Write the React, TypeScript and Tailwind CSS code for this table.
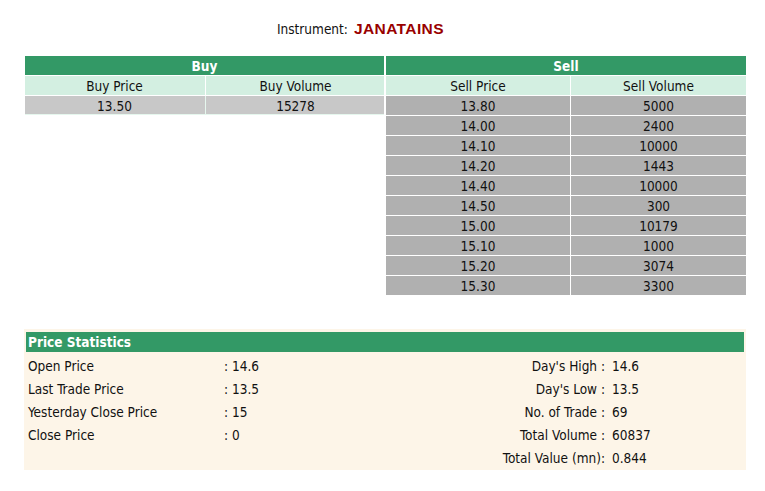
const buyRows = [{ price: "13.50", volume: "15278" }];

const sellRows = [
  { price: "13.80", volume: "5000" },
  { price: "14.00", volume: "2400" },
  { price: "14.10", volume: "10000" },
  { price: "14.20", volume: "1443" },
  { price: "14.40", volume: "10000" },
  { price: "14.50", volume: "300" },
  { price: "15.00", volume: "10179" },
  { price: "15.10", volume: "1000" },
  { price: "15.20", volume: "3074" },
  { price: "15.30", volume: "3300" },
];

const leftStats = [
  { label: "Open Price", value: "14.6" },
  { label: "Last Trade Price", value: "13.5" },
  { label: "Yesterday Close Price", value: "15" },
  { label: "Close Price", value: "0" },
  { label: "", value: "" },
];

const rightStats = [
  { label: "Day's High :", value: "14.6" },
  { label: "Day's Low :", value: "13.5" },
  { label: "No. of Trade :", value: "69" },
  { label: "Total Volume :", value: "60837" },
  { label: "Total Value (mn):", value: "0.844" },
];

const font = "font-['DejaVu_Sans_Condensed','DejaVu_Sans',sans-serif]";

export default function App() {
  return (
    <div className={`w-[765px] h-[491px] bg-white text-[13.5px] text-[#111] ${font}`}>
      <div className="pt-[20px] h-[56px] flex items-start pl-[277px]">
        <span className="leading-[18px]">Instrument:</span>
        <span className="ml-[6px] leading-[18px] font-['Liberation_Sans',sans-serif] font-bold text-[15.5px] tracking-[0.4px] text-[#990000]">
          JANATAINS
        </span>
      </div>

      <div className="ml-[25px] w-[721px] flex gap-[2px] items-start">
        {/* buy side */}
        <div className="w-[359px] flex flex-col gap-px">
          <div className="h-[19px] bg-[#339966] text-white font-bold text-center leading-[20px]">Buy</div>
          <div className="flex gap-px h-[19px] bg-[#d3efe1] leading-[20px] text-center">
            <div className="w-[179px]">Buy Price</div>
            <div className="w-[1px] bg-white"></div>
            <div className="flex-1">Buy Volume</div>
          </div>
          {buyRows.map((r) => (
            <div key={r.price} className="flex gap-px h-[19px] bg-[#c8c8c8] leading-[20px] text-center border-b border-[#e6f7ee]">
              <div className="w-[179px]">{r.price}</div>
              <div className="w-[1px] bg-[#e6f7ee]"></div>
              <div className="flex-1">{r.volume}</div>
            </div>
          ))}
        </div>

        {/* sell side */}
        <div className="w-[360px] flex flex-col gap-px">
          <div className="h-[19px] bg-[#339966] text-white font-bold text-center leading-[20px]">Sell</div>
          <div className="flex h-[19px] bg-[#d3efe1] leading-[20px] text-center">
            <div className="w-[184px]">Sell Price</div>
            <div className="w-[1px] bg-white"></div>
            <div className="flex-1">Sell Volume</div>
          </div>
          {sellRows.map((r, i) => (
            <div key={i} className="flex h-[19px] bg-[#b0b0b0] leading-[20px] text-center">
              <div className="w-[184px]">{r.price}</div>
              <div className="w-[1px] bg-white"></div>
              <div className="flex-1">{r.volume}</div>
            </div>
          ))}
        </div>
      </div>

      <div className="mt-[34px] ml-[24px] w-[722px] bg-[#fdf5e8] pt-[3px] px-[2px]">
        <div className="h-[20px] bg-[#339966] text-white font-bold leading-[20px] pl-[2px]">Price Statistics</div>
        <div className="flex pt-[3px]">
          <div className="w-[440px]">
            {leftStats.map((s, i) => (
              <div key={i} className="h-[23px] leading-[23px] flex">
                <div className="w-[198px] pl-[2px]">{s.label}</div>
                <div>{s.value ? `: ${s.value}` : ""}</div>
              </div>
            ))}
          </div>
          <div className="flex-1">
            {rightStats.map((s) => (
              <div key={s.label} className="h-[23px] leading-[23px] flex">
                <div className="w-[139px] text-right">{s.label}</div>
                <div className="pl-[7px]">{s.value}</div>
              </div>
            ))}
          </div>
        </div>
      </div>
    </div>
  );
}
